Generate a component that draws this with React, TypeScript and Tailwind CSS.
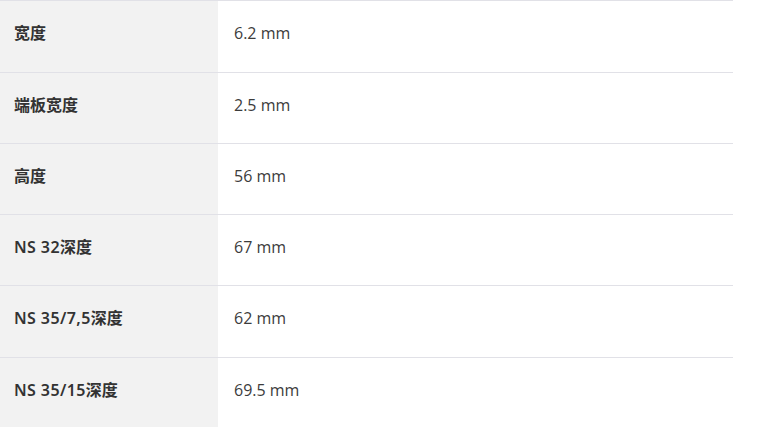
import React from 'react';

const specs: { label: string; value: string; h: string }[] = [
  { label: '宽度', value: '6.2 mm', h: 'h-[72px]' },
  { label: '端板宽度', value: '2.5 mm', h: 'h-[71px]' },
  { label: '高度', value: '56 mm', h: 'h-[71px]' },
  { label: 'NS 32深度', value: '67 mm', h: 'h-[71px]' },
  { label: 'NS 35/7,5深度', value: '62 mm', h: 'h-[72px]' },
  { label: 'NS 35/15深度', value: '69.5 mm', h: 'h-[72px]' },
];

// latin prefix (e.g. "NS 35/15") renders a touch wider than the cjk part
const splitLabel = (label: string) => {
  const m = label.match(/^([\x00-\x7f]*)(.*)$/);
  return m ? [m[1], m[2]] : ['', label];
};

export default function App() {
  return (
    <div className="w-[779px] h-[427px] overflow-hidden bg-white">
      <div className="w-[733px] flex flex-col">
        {specs.map((row) => {
          const [latin, cjk] = splitLabel(row.label);
          return (
            <div key={row.label} className={`flex ${row.h} shrink-0 border-t border-[#e1e1e7]`}>
              <div className="w-[218px] shrink-0 bg-[#f2f2f2] pl-[14px] pt-[20px] text-[16px] leading-[24px] font-semibold text-[#333333] font-['Noto_Sans','Noto_Sans_CJK_SC',sans-serif]">
                {latin && <span className="tracking-[0.4px]">{latin}</span>}
                {cjk}
              </div>
              <div className="flex-1 pl-4 pt-[20px] text-[16px] leading-[24px] text-[#3c3c3c] font-['Open_Sans','Noto_Sans_CJK_SC',sans-serif]">
                {row.value}
              </div>
            </div>
          );
        })}
      </div>
    </div>
  );
}
